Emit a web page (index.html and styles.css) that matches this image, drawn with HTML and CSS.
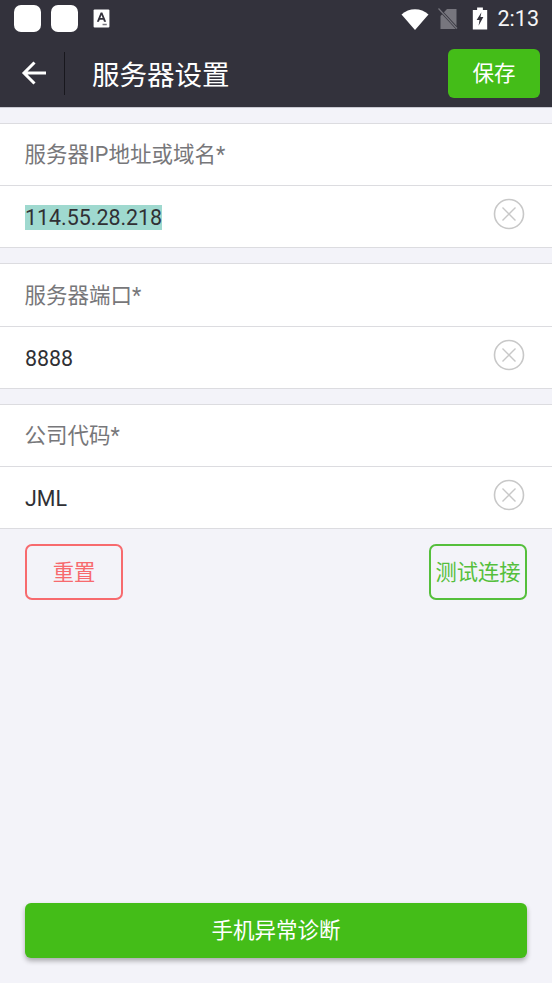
FILE: index.html
```html
<!DOCTYPE html>
<html lang="en">
<head>
    <meta charset="UTF-8">
    <meta name="viewport" content="width=device-width, initial-scale=1.0">
    <title>服务器设置</title>
    <link rel="stylesheet" href="styles.css">
</head>
<body>
    <div class="header">
        <div class="status-bar">
            <div class="status-left">
                <span class="notify-box"></span>
                <span class="notify-box"></span>
                <svg class="a-icon" width="17" height="19" viewBox="0 0 16 18">
                    <rect x="0.5" y="0.5" width="15" height="17" rx="1" fill="#fff"/>
                    <path d="M3.6 12 L7.2 3.4 H8.8 L12.4 12 H10.4 L9.7 10.2 H6.3 L5.6 12 Z M6.9 8.6 H9.1 L8 5.8 Z" fill="#33323c" fill-rule="evenodd"/>
                    <rect x="9" y="14" width="4" height="1.4" fill="#77767e"/>
                </svg>
            </div>
            <div class="status-right">
                <svg class="wifi-icon" width="28" height="22" viewBox="0 0 28 22">
                    <path d="M0.5 6.5 C8 -0.5 20 -0.5 27.5 6.5 L14 22 Z" fill="#fff"/>
                </svg>
                <svg class="sim-icon" width="21" height="22" viewBox="0 0 21 22">
                    <path d="M9 1 H18.5 V21 H2.5 V8 Z" fill="#77767e"/>
                    <path d="M1 1 L20 21.5" stroke="#33323c" stroke-width="2.6"/>
                    <path d="M0.5 0.5 L19 20.5" stroke="#77767e" stroke-width="1.2"/>
                </svg>
                <svg class="battery-icon" width="16" height="23" viewBox="0 0 16 24">
                    <path d="M5 0.5 H11 V3 H15.5 V23.5 H0.5 V3 H5 Z" fill="#fff"/>
                    <path d="M9.5 5.5 L4.5 13.5 H7.5 L6.5 19.5 L11.5 10.5 H8.5 Z" fill="#33323c"/>
                </svg>
                <span class="clock">2:13</span>
            </div>
        </div>
        <div class="toolbar">
            <svg class="back-icon" width="26" height="26" viewBox="0 0 26 26">
                <path d="M25 13 H3 M13.5 2.5 L3 13 L13.5 23.5" fill="none" stroke="#fff" stroke-width="3"/>
            </svg>
            <span class="divider"></span>
            <span class="title">服务器设置</span>
            <button class="save-btn">保存</button>
        </div>
    </div>

    <div class="content">
        <div class="field">
            <div class="field-label">服务器IP地址或域名*</div>
            <div class="field-value">
                <span class="selected">114.55.28.218</span>
                <svg class="clear-icon" width="32" height="32" viewBox="0 0 32 32">
                    <circle cx="16" cy="16" r="14.5" fill="none" stroke="#c8c8c8" stroke-width="1.6"/>
                    <path d="M9.5 9.5 L22.5 22.5 M22.5 9.5 L9.5 22.5" stroke="#c8c8c8" stroke-width="1.4"/>
                </svg>
            </div>
        </div>
        <div class="field">
            <div class="field-label tall">服务器端口*</div>
            <div class="field-value">
                <span>8888</span>
                <svg class="clear-icon" width="32" height="32" viewBox="0 0 32 32">
                    <circle cx="16" cy="16" r="14.5" fill="none" stroke="#c8c8c8" stroke-width="1.6"/>
                    <path d="M9.5 9.5 L22.5 22.5 M22.5 9.5 L9.5 22.5" stroke="#c8c8c8" stroke-width="1.4"/>
                </svg>
            </div>
        </div>
        <div class="field">
            <div class="field-label">公司代码*</div>
            <div class="field-value">
                <span>JML</span>
                <svg class="clear-icon" width="32" height="32" viewBox="0 0 32 32">
                    <circle cx="16" cy="16" r="14.5" fill="none" stroke="#c8c8c8" stroke-width="1.6"/>
                    <path d="M9.5 9.5 L22.5 22.5 M22.5 9.5 L9.5 22.5" stroke="#c8c8c8" stroke-width="1.4"/>
                </svg>
            </div>
        </div>

        <div class="actions">
            <button class="reset-btn">重置</button>
            <button class="test-btn">测试连接</button>
        </div>

        <button class="diagnose-btn">手机异常诊断</button>
    </div>
</body>
</html>
```

FILE: styles.css
```css
*
{
    margin: 0;
    padding: 0;
    box-sizing: border-box;
}

body
{
    width: 552px;
    height: 983px;
    overflow: hidden;
    display: flex;
    flex-direction: column;
    background-color: #f3f3f9;
    font-family: Roboto, "Noto Sans CJK SC", sans-serif;
}

button
{
    font-family: inherit;
    cursor: pointer;
}

.header
{
    height: 108px;
    background-color: #33323c;
    border-bottom: 1px solid #c9c9d2;
}

.status-bar
{
    height: 36px;
    display: flex;
    justify-content: space-between;
    align-items: center;
    padding: 1px 13px 0 14px;
}

.status-left
{
    display: flex;
    align-items: center;
}

.notify-box
{
    width: 27px;
    height: 27px;
    margin-right: 10px;
    border-radius: 7px;
    background-color: #fff;
}

.a-icon
{
    margin-left: 5px;
}

.status-right
{
    display: flex;
    align-items: center;
}

.wifi-icon
{
    margin-right: 9px;
}

.sim-icon
{
    margin-right: 13px;
}

.battery-icon
{
    margin-right: 10px;
}

.clock
{
    color: #f4f4f6;
    font-size: 21.5px;
}

.toolbar
{
    height: 71px;
    display: flex;
    align-items: center;
    padding: 3px 12px 0 21px;
}

.back-icon
{
    margin-right: 17px;
}

.divider
{
    width: 1px;
    height: 43px;
    background-color: #18171d;
}

.title
{
    flex: 1;
    margin-left: 27px;
    color: #fff;
    font-size: 27.5px;
}

.save-btn
{
    width: 92px;
    height: 49px;
    padding-bottom: 4px;
    border: none;
    border-radius: 6px;
    background-color: #44bd18;
    color: #fff;
    font-size: 21.5px;
}

.content
{
    flex: 1;
    display: flex;
    flex-direction: column;
    padding-top: 15px;
}

.field
{
    margin-bottom: 15px;
    background-color: #fff;
    border-top: 1px solid #dcdce0;
    border-bottom: 1px solid #dcdce0;
}

.field:nth-child(3)
{
    margin-bottom: 0;
}

.field-label
{
    height: 61px;
    display: flex;
    align-items: center;
    padding: 0 0 4px 24.5px;
    color: #77777a;
    font-size: 21.5px;
}

.field-label.tall
{
    height: 62px;
}

.field-value
{
    height: 62px;
    display: flex;
    justify-content: space-between;
    align-items: center;
    padding: 2px 27px 0 25px;
    border-top: 1px solid #dcdce0;
    color: #303034;
    font-size: 21.4px;
}

.selected
{
    background-color: #9fd9cf;
}

.clear-icon
{
    margin-top: -8px;
}

.actions
{
    display: flex;
    justify-content: space-between;
    padding: 15px 25px 0 25px;
}

.reset-btn,
.test-btn
{
    width: 98px;
    height: 56px;
    padding-bottom: 4px;
    border-radius: 7px;
    background-color: transparent;
    font-size: 21.3px;
}

.reset-btn
{
    border: 2px solid #f76a6e;
    color: #f76a6e;
}

.test-btn
{
    border: 2px solid #55bf3c;
    color: #55bf3c;
    white-space: nowrap;
}

.diagnose-btn
{
    height: 55px;
    margin: auto 25px 25px 25px;
    padding-bottom: 4px;
    border: none;
    border-radius: 6px;
    background-color: #44bd18;
    box-shadow: 0 3px 5px rgba(0, 0, 0, 0.3);
    color: #fff;
    font-size: 21.5px;
}
```
